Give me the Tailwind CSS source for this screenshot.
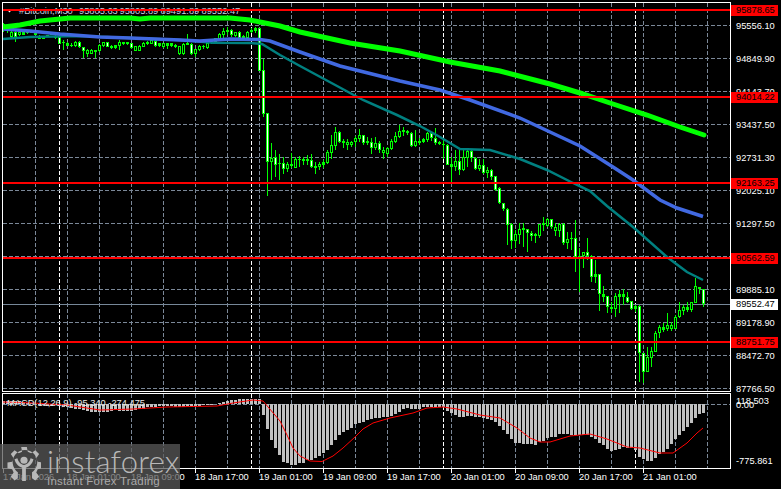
<!DOCTYPE html>
<html lang="en">
<head>
  <meta charset="UTF-8">
  <title>#Bitcoin,M30</title>
  <script src="https://cdn.jsdelivr.net/npm/@tailwindcss/browser@4"></script>
</head>
<body class="bg-black">
  <div class="relative w-[781px] h-[489px] bg-black overflow-hidden pl-[2px] pt-[2px] flex flex-col font-['Liberation_Sans',Arial,sans-serif] text-[9.3px] leading-[12px] text-white">

    <!-- price chart + axis -->
    <div class="flex h-[390px] shrink-0">
      <div class="w-[729px] h-full border border-white shrink-0">
        <svg id="main" class="block w-[727px] h-[388px]" viewBox="3 3 727 388"></svg>
      </div>
      <div id="priceAxis" class="relative flex-1"></div>
    </div>

    <!-- macd + axis -->
    <div class="flex h-[76px] mt-px shrink-0">
      <div class="w-[729px] h-full border border-white shrink-0">
        <svg id="macd" class="block w-[727px] h-[74px]" viewBox="3 394 727 74"></svg>
      </div>
      <div id="macdAxis" class="relative flex-1"></div>
    </div>

    <!-- time axis -->
    <div id="timeAxis" class="relative flex-1"></div>

    <!-- watermark -->
    <div class="absolute left-0 bottom-0 w-[180px] h-[45px] bg-[#5a5a5a]/75 flex items-start pl-[7px] pt-[3px] gap-[6px]">
      <svg class="w-[34px] h-[34px] shrink-0" viewBox="0 0 36 36">
        <g fill="#b8b8b8">
          <path fill-rule="evenodd" d="M15 0h6l1 5 3.500 1.500 4.500-3 4 4-3 4.500 1.500 3.500 5 1v6l-5 1-1.500 3.500 3 4.500-4 4-3.500-2.300v-6.500a13 13 0 1 0-15 0v6.500l-3.500 2.300-4-4 3-4.500-1.500-3.500-5-1v-6l5-1 1.500-3.500-3-4.500 4-4 4.500 3 3.500-1.500z"/>
          <circle cx="18" cy="14" r="3.800"/>
          <path d="M8 13c1 5 5 8 8 9v14h4v-14c3-1 7-4 8-9l-3-1c-1 4-4 7-7 7s-6-3-7-7z"/>
        </g>
      </svg>
      <div class="flex flex-col text-[#b8b8b8]">
        <span class="font-['Lato',sans-serif] font-light text-[31px] leading-[28px] tracking-[0.2px]">instaforex</span>
        <span class="font-['Liberation_Sans',sans-serif] text-[11.500px] leading-[13px] tracking-[0.2px] text-[#aaaaaa]">Instant Forex Trading</span>
      </div>
    </div>
  </div>

  <script>
    const NS = 'http://www.w3.org/2000/svg';
    const add = (svg, tag, attrs, text) => {
      const el = document.createElementNS(NS, tag);
      for (const a in attrs) el.setAttribute(a, attrs[a]);
      if (text) el.textContent = text;
      svg.appendChild(el);
      return el;
    };
    const barX = k => 3 + 4 * k;

    // body top, body bottom, wick top, wick bottom, bear (read off 3x crops)
    const block1 = [[72,88,68,95,0],[80,92,76,98,0],[95,110,92,115,0],[95,110,88,125,1],[95,105,90,108,0],[97,104,95,105,0],[93,100,92,102,0],[92,98,90,100,0],[97,104,95,105,1],[107,116,105,118,1],[108,116,108,116,0],[106,110,105,112,0],[101,104,100,105,0],[109,112,106,116,0],[112,132,112,132,1],[125,127,120,150,0],[129,137,127,138,1],[134,136,130,140,0],[126,138,122,140,0],[126,142,124,144,1],[140,152,140,175,1],[150,162,148,170,0],[150,162,148,162,0],[150,153,150,175,0],[135,152,133,155,0],[126,138,125,140,0],[126,140,125,141,1],[138,142,136,146,0],[136,145,134,147,0],[125,137,120,150,0],[127,130,125,136,0],[127,130,125,135,0],[130,145,128,147,1],[138,152,138,153,0],[138,152,136,153,0],[128,140,125,142,0],[126,130,122,135,0],[120,132,115,133,0],[122,138,115,140,1],[130,138,128,142,0],[130,140,128,144,0],[130,138,128,148,0],[130,137,128,142,0],[135,140,132,144,0],[138,162,138,164,0],[132,162,130,164,0],[129,132,102,136,0],[132,162,130,164,1],[148,162,148,170,0],[138,150,136,152,0],[137,142,134,146,0],[130,144,128,146,0],[120,130,118,132,0],[115,125,113,127,0],[102,118,98,120,0],[94,105,85,115,0],[90,94,82,105,0],[90,105,88,110,1],[95,108,95,112,0],[95,113,92,115,1],[108,113,105,115,0],[95,113,92,115,0],[90,94,85,100,0],[85,93,80,98,0],[85,212,85,214,1],[210,342,178,350,1]];
    const block2 = [[40,185,40,288,1],[175,185,128,240,0],[172,195,150,230,1],[188,192,163,240,0],[190,207,172,222,1],[192,207,185,215,0],[193,198,158,205,0],[178,203,170,205,0],[176,181,168,200,0],[178,183,172,195,0],[178,183,165,195,0],[180,202,162,205,1],[198,203,185,222,0],[192,202,185,210,0],[186,195,180,205,0],[155,190,150,192,0],[135,158,105,178,0],[97,138,82,150,0],[97,125,92,130,1],[123,128,118,145,0],[125,135,118,150,0],[125,135,122,140,0],[115,125,108,140,0],[105,118,88,125,0],[105,130,105,135,1],[123,128,112,135,0],[125,145,115,162,1],[130,143,112,150,0],[130,150,122,160,1],[150,160,140,177,0],[145,162,140,170,0],[123,147,118,150,0],[108,125,95,128,0],[92,110,75,115,0],[90,94,80,108,0],[93,100,90,105,1],[98,138,95,142,1],[123,138,90,142,0],[123,128,115,135,0],[118,126,115,130,0],[100,120,95,125,0],[100,115,98,122,1],[115,130,85,135,1],[127,133,122,135,1],[131,136,120,178,0],[135,195,133,195,1],[192,200,172,245,0],[183,200,150,212,0],[183,210,150,225,1],[170,210,150,212,0],[153,173,150,200,0],[153,173,150,185,1],[173,207,172,210,1],[195,207,178,212,0],[195,220,178,222,1],[210,220,200,235,0],[210,232,208,240,1]];
    const block3 = [[18,60,18,62,1],[55,100,50,102,1],[100,117,98,122,1],[118,165,115,225,1],[162,212,160,237,1],[192,212,180,235,0],[178,195,158,222,0],[174,179,158,230,0],[176,188,176,245,1],[188,197,182,212,1],[193,198,190,218,0],[162,198,162,205,0],[160,165,140,183,0],[148,168,145,170,0],[148,172,148,178,1],[172,182,158,198,0],[162,182,158,200,0],[162,220,158,225,1],[208,220,185,238,0],[203,208,185,240,0],[205,262,150,305,1],[258,268,235,365,0],[247,258,245,295,0],[247,258,205,270,1],[258,320,255,335,1],[313,320,270,340,0],[313,373,313,422,1],[373,380,348,395,0],[378,412,378,428,1],[410,416,395,430,0],[378,416,370,442,0],[373,380,360,430,0],[373,380,358,405,0],[380,395,365,400,1],[394,416,392,420,1],[408,416,405,425,0],[408,550,405,635,1],[550,605,548,640,1],[560,605,530,605,0],[543,563,530,590,0],[490,545,483,545,0],[472,490,465,505,0],[472,480,460,485,0],[466,478,430,482,0],[466,478,455,482,0],[442,476,435,478,0],[420,442,395,445,0],[412,422,405,435,0],[412,420,395,425,0],[396,420,395,425,0],[348,398,325,400,0],[350,358,350,372,0],[358,403,358,412,1]];
    const toY = (b, off) => b.map(c => [c[0]/3+off, c[1]/3+off, c[2]/3+off, c[3]/3+off, c[4]]);
    const candles = [...toY(block1, 0), ...toY(block2, 100), ...toY(block3, 170)];

    const greenMA = [[3,27],[20,25],[40,21],[70,18],[130,18],[140,19],[150,18],[230,18],[250,20],[260,22],[280,26],[300,32],[350,43],[400,51],[450,62],[500,71],[550,84],[580,93],[613,104],[647,115],[680,127],[704,135]];
    const blueMA = [[3,29],[30,31],[60,34],[100,37],[130,38],[180,40],[200,41],[230,39],[260,39.5],[270,41],[300,52],[340,66],[400,81],[440,90],[470,100],[520,118],[580,146],[613,167],[633,180],[660,200],[677,208],[703,216.5]];
    const tealMA = [[3,39],[30,37],[80,36],[130,38],[180,40],[213,42.7],[250,43],[262,44],[280,55],[300,66],[363,100],[397,115],[420,126],[440,137],[460,149],[490,150],[520,159],[547,170],[573,183],[590,191],[607,206],[633,227],[667,257],[687,272],[703,280]];
    const pts = a => a.map(p => p.join(',')).join(' ');

    function drawGrid(svg, top, bottom) {
      for (let x = 35.5; x < 730; x += 32) add(svg, 'line', {x1:x, x2:x, y1:top, y2:bottom, stroke:'#7b8898', 'stroke-dasharray':'4 2'});
      for (let x = 59.5; x < 730; x += 192) add(svg, 'line', {x1:x, x2:x, y1:top, y2:bottom, stroke:'#ffffff', 'stroke-dasharray':'4 2'});
    }

    // main chart
    const main = document.getElementById('main');
    const gridYs = [25,58,91,124,157,190,223,256,289,322,355,388];
    drawGrid(main, 3, 391);
    gridYs.forEach(y => add(main, 'line', {x1:3, x2:730, y1:y+.5, y2:y+.5, stroke:'#7b8898', 'stroke-dasharray':'4 2'}));
    add(main, 'line', {x1:3, x2:730, y1:304.5, y2:304.5, stroke:'#778899'});

    candles.forEach((c, k) => {
      const x = barX(k);
      add(main, 'rect', {x:x, y:c[2], width:1, height:c[3]-c[2], fill:'#00ff00', 'shape-rendering':'crispEdges'});
      add(main, 'rect', {x:x-1, y:c[0], width:3, height:Math.max(c[1]-c[0],1.5), fill:'#00ff00', 'shape-rendering':'crispEdges'});
      if (c[1]-c[0] > 3) add(main, 'rect', {x:x, y:c[0]+1, width:1, height:c[1]-c[0]-2, fill:c[4] ? '#ffffff' : '#000000', 'shape-rendering':'crispEdges'});
    });

    add(main, 'polyline', {points:pts(tealMA), fill:'none', stroke:'#008080', 'stroke-width':2.5});
    add(main, 'polyline', {points:pts(blueMA), fill:'none', stroke:'#4169e1', 'stroke-width':3.5});
    add(main, 'polyline', {points:pts(greenMA), fill:'none', stroke:'#00ff00', 'stroke-width':5, 'stroke-linecap':'round'});

    // header text sits under the level line
    add(main, 'polygon', {points:'6.500,9 12.500,9 9.500,12.500', fill:'#ffffff'});
    [['#Bitcoin,M30',19],['95805.63',79],['95805.89',119.500],['89491.89',160.500],['89552.47',201.500]].forEach(([t, x]) => {
      add(main, 'text', {x:x, y:13.500, fill:'#c8d0e0', 'font-size':'9.3'}, t);
    });

    const levels = [[95878.65,10],[94014.22,97],[92163.25,183],[90562.59,258],[88751.75,342]];
    levels.forEach(([, y]) => add(main, 'line', {x1:3, x2:730, y1:y, y2:y, stroke:'#ff0000', 'stroke-width':2}));

    // price axis
    const priceAxis = document.getElementById('priceAxis');
    const grid = ['95556.10','94849.90','94143.70','93437.50','92731.30','92025.10','91297.50','90591.30','89885.10','89178.90','88472.70','87766.50'];
    let html = '';
    grid.forEach((t, i) => {
      html += `<div class="absolute left-[5px]" style="top:${gridYs[i]-7.5}px">${t}</div>`;
    });
    levels.forEach(([p, y]) => {
      html += `<div class="absolute left-0 w-[47px] h-[11px] bg-[#ff0000] text-black leading-[11px] pl-[5px]" style="top:${y-7.5}px">${p.toFixed(2)}</div>`;
    });
    html += `<div class="absolute left-0 w-[47px] h-[11px] bg-white text-black leading-[11px] pl-[5px]" style="top:${304-7.5}px">89552.47</div>`;
    priceAxis.innerHTML = html;

    // macd window
    const macd = document.getElementById('macd');
    drawGrid(macd, 394, 468);
    add(macd, 'line', {x1:3, x2:730, y1:404.5, y2:404.5, stroke:'#7b8898', 'stroke-dasharray':'4 2'});

    // bar ends in 3x crop pixels, zero line at 72
    const early = [62,62,62,63,64,66,68,70,72,74,76,78,78,76,78,80,82,85,87,88,90,92,95,96,97,97,95,92,90,92,92,92,92,90,88,86,82,82,80,78,78,77,78,80,80,80,78,78,78,78,76,76,75,72,70,66,62,60,60,58,58,57,57,56,57,105,147,180,205,225];
    const mid = [245,248,255,255,250,248,240,240,235,228,220,210,195,180,165,155,150,145,133,130,125,120,118,115,115,112,112,108,103,95,88,85,87,88,87,82,82,82,82,82,82,92,100,105,110,110,108,108,110,112,115,118,120,127,137,150,163,178,190,190,192,192];
    const late = [192,195,185,182,175,172,170,162,162,162,165,165,165,165,165,172,178,188,195,207,212,210,207,200,205,205,210,232,238,242,243,235,222,215,207,192,178,165,152,142,130,115,102,100];
    [...early, ...mid, ...late].forEach((v, k) => {
      const a = 380 + v/3, b = 404;
      add(macd, 'rect', {x:barX(k)-1, y:Math.min(a,b), width:3, height:Math.abs(a-b), fill:'#c0c0c0', 'shape-rendering':'crispEdges'});
    });

    const signal = [[3,402],[33,403],[67,405],[100,410],[133,409],[167,407],[217,406],[233,403],[253,400],[263,401],[280,421],[287,435],[293,448],[300,456],[310,461],[322,461.500],[333,456],[343,448],[355,437],[363,429],[373,423],[390,418],[413,413],[427,408],[443,407],[457,409],[480,415],[500,418],[517,428],[530,438],[540,442],[550,442],[570,436],[590,434],[607,439],[627,447],[640,448],[660,453],[673,453],[687,443],[697,433],[703,428]];
    add(macd, 'polyline', {points:pts(signal), fill:'none', stroke:'#ff0000', 'stroke-width':1});
    add(macd, 'text', {x:7, y:405.500, fill:'#e8e8e8', 'font-size':'9.3'}, 'MACD(12,26,9) -95.340 -274.475');

    const macdAxis = document.getElementById('macdAxis');
    [['118.503',0],['0.00',4],['-775.861',60]].forEach(([t, dy]) => {
      macdAxis.innerHTML += `<div class="absolute left-[5px]" style="top:${dy+1.500}px">${t}</div>`;
    });

    // time axis
    const timeAxis = document.getElementById('timeAxis');
    [['17 Jan 2026',3],['18 Jan 01:00',67],['18 Jan 09:00',131],['18 Jan 17:00',195],['19 Jan 01:00',259],['19 Jan 09:00',323],['19 Jan 17:00',387],['20 Jan 01:00',451],['20 Jan 09:00',515],['20 Jan 17:00',579],['21 Jan 01:00',643]].forEach(([t, x]) => {
      timeAxis.innerHTML += `<div class="absolute top-0 w-px h-[4px] bg-white" style="left:${x-2}px"></div><div class="absolute top-[2px] whitespace-nowrap" style="left:${x-2}px">${t}</div>`;
    });
  </script>
</body>
</html>
